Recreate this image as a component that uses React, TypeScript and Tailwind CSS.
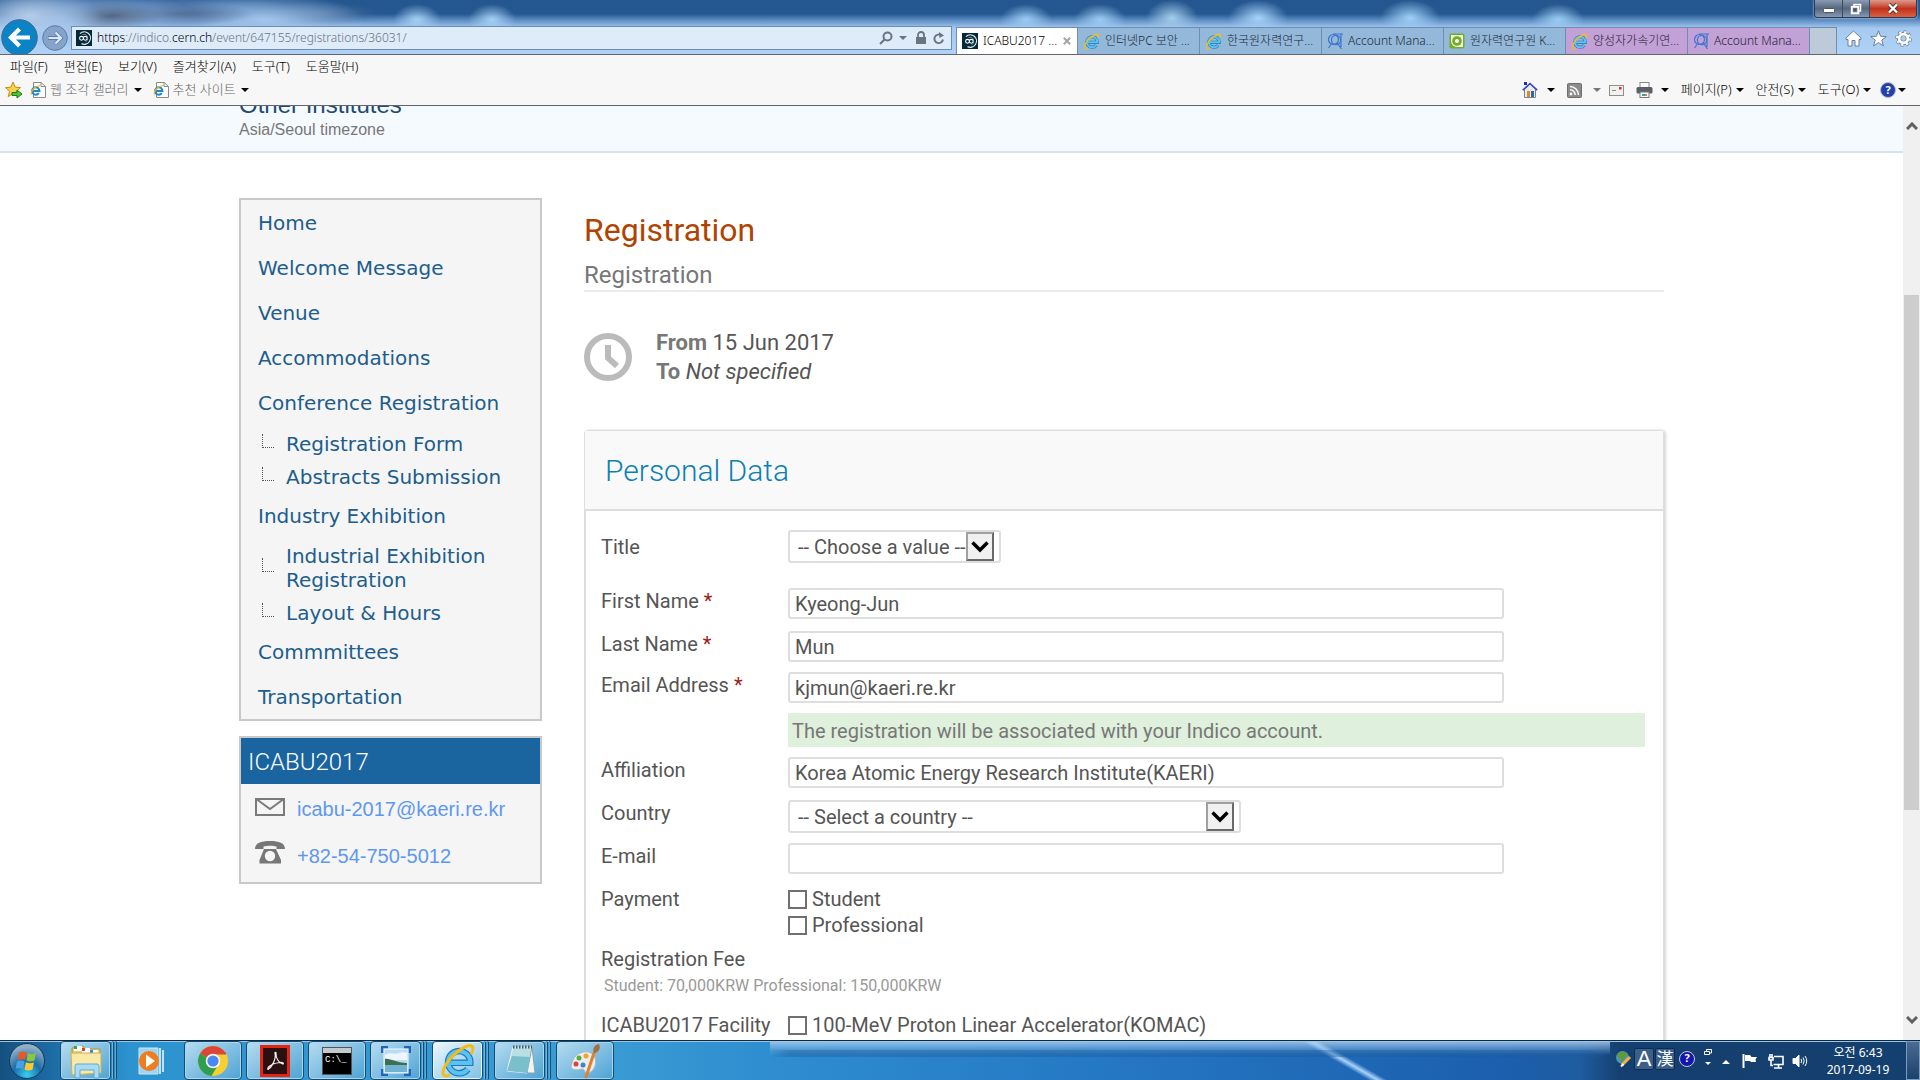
import React from 'react';
import clsx from 'clsx';

const navTabs = [
  { label: 'ICABU2017 ...', icon: 'indico', tone: 'active' },
  { label: '인터넷PC 보안 ...', icon: 'ie', tone: 'blue' },
  { label: '한국원자력연구...', icon: 'ie', tone: 'blue' },
  { label: 'Account Mana...', icon: 'cern', tone: 'blue' },
  { label: '원자력연구원 K...', icon: 'kaeri', tone: 'blue' },
  { label: '양성자가속기연...', icon: 'ie', tone: 'purple' },
  { label: 'Account Mana...', icon: 'cern', tone: 'purple' },
];

const menuBar = ['파일(F)', '편집(E)', '보기(V)', '즐겨찾기(A)', '도구(T)', '도움말(H)'];

const conferenceMenu = [
  { label: 'Home' },
  { label: 'Welcome Message' },
  { label: 'Venue' },
  { label: 'Accommodations' },
  { label: 'Conference Registration', children: ['Registration Form', 'Abstracts Submission'] },
  { label: 'Industry Exhibition', children: ['Industrial Exhibition Registration', 'Layout & Hours'] },
  { label: 'Commmittees' },
  { label: 'Transportation' },
];

interface IconProps {
  className?: string;
}

const IeLogo: React.FC<IconProps> = ({ className }) => (
  <svg viewBox="0 0 24 24" fill="none" className={className}>
    <path d="M7 13.2H20.2A7.4 7.4 0 1 0 18.6 17.4" stroke="#1b77bb" strokeWidth="4.4" />
    <path d="M7 13.2H20.2A7.4 7.4 0 1 0 18.6 17.4" stroke="#5cc3f0" strokeWidth="2.8" />
    <path d="M6 21.5C1.5 23.5 .5 19.5 4.5 13.5S16.500 1.200 20.500 1.800C22.500 2.200 22 4.500 21 6.800" stroke="#f3bd16" strokeWidth="2" strokeLinecap="round" />
  </svg>
);

const IndicoLogo: React.FC<IconProps> = ({ className }) => (
  <svg viewBox="0 0 16 16" fill="none" className={className}>
    <rect width="16" height="16" fill="#04283a" />
    <circle cx="5.500" cy="8.300" r="1.900" stroke="#fff" strokeWidth="1.100" />
    <circle cx="9.300" cy="8.300" r="1.900" stroke="#fff" strokeWidth="1.100" />
    <path d="M4 3.600A6.200 6.200 0 1 1 5.500 13.600" stroke="#dfe8ec" strokeWidth="1.200" />
    <path d="M6.500 4.600A4 4 0 0 1 9.500 12" stroke="#9db2bd" strokeWidth=".8" />
  </svg>
);

const CernLogo: React.FC<IconProps> = ({ className }) => (
  <svg viewBox="0 0 16 16" fill="none" stroke="#3f74cf" strokeWidth="1.200" className={className}>
    <circle cx="6.500" cy="6.500" r="5" />
    <circle cx="9" cy="7" r="4.600" />
    <path d="M6 1H16M14 1V14M4 11.500 1.500 15M10.500 10 14.500 16" />
  </svg>
);

const KaeriLogo: React.FC<IconProps> = ({ className }) => (
  <svg viewBox="0 0 16 16" className={className}>
    <rect x=".5" y=".5" width="15" height="15" rx="2" fill="#72ae24" />
    <path d="M2 2H14V14H8A6 6 0 0 1 2 8Z" fill="#fff" opacity=".9" />
    <circle cx="8" cy="8" r="4.800" fill="#72ae24" />
    <circle cx="8" cy="8" r="2" fill="#fff" />
  </svg>
);

const TabIcon: React.FC<{ name: string }> = ({ name }) => {
  if (name === 'indico') return <IndicoLogo className="size-4 shrink-0" />;
  if (name === 'cern') return <CernLogo className="size-4 shrink-0" />;
  if (name === 'kaeri') return <KaeriLogo className="size-4 shrink-0" />;
  return <IeLogo className="size-[17px] shrink-0" />;
};

const Caret: React.FC<IconProps> = ({ className }) => (
  <svg viewBox="0 0 8 4" className={clsx('h-1 w-2 shrink-0', className)}>
    <path d="M0 0H8L4 4Z" fill="currentColor" />
  </svg>
);

const IePage = () => (
  <svg viewBox="0 0 16 18" fill="none" className="h-[18px] w-4 shrink-0">
    <path d="M3.500 1.500H11L15.500 5.500V16.500H3.500Z" fill="#fff" stroke="#8a8a8a" />
    <path d="M11 1.500V5.500H15.500" stroke="#8a8a8a" />
    <path d="M2.500 10H9.500A3.700 3.700 0 1 0 8.800 12.200" stroke="#1e86d0" strokeWidth="2" />
    <path d="M1.500 13.500C.5 11 4 5 10.500 4.500" stroke="#efb61c" strokeWidth="1.200" />
  </svg>
);

const TitleBar = () => (
  <div className="flex h-[19px] justify-end pr-[3px]">
    <div className="flex h-[18px] overflow-hidden rounded-b border border-t-0 border-[#2a3a50] shadow-[0_0_2px_#ffffff]">
      <button aria-label="Minimize" className="flex w-7 items-center justify-center border-r border-[#3c4a5e] bg-linear-to-b from-[#8a9bb2] via-[#56687f] to-[#8599b3]">
        <svg viewBox="0 0 12 5" className="mt-1 h-[5px] w-3"><rect x=".5" y=".5" width="11" height="4" rx="1" fill="#fff" stroke="#4b5563" /></svg>
      </button>
      <button aria-label="Restore" className="flex w-[27px] items-center justify-center border-r border-[#3c4a5e] bg-linear-to-b from-[#8a9bb2] via-[#56687f] to-[#8599b3]">
        <svg viewBox="0 0 12 12" fill="none" className="size-3">
          <path d="M4 3V1.500H10.500V8H9" stroke="#fff" strokeWidth="1.500" />
          <rect x="1.800" y="3.800" width="6.500" height="6.500" stroke="#fff" strokeWidth="2" />
          <rect x="4" y="6" width="2" height="2" fill="#46556b" />
        </svg>
      </button>
      <button aria-label="Close" className="flex w-[46px] items-center justify-center bg-linear-to-b from-[#dc9a8c] via-[#c2311b] to-[#d9603f]">
        <svg viewBox="0 0 12 11" className="h-[11px] w-3">
          <path d="M2 1.500 10 9.500M10 1.500 2 9.500" stroke="#4f3434" strokeWidth="4" />
          <path d="M2 1.500 10 9.500M10 1.500 2 9.500" stroke="#fff" strokeWidth="2.400" />
        </svg>
      </button>
    </div>
  </div>
);

const AddressRow = () => (
  <div className="flex h-[35px] items-end">
    <div className="flex h-[35px] w-[71px] shrink-0 items-start overflow-hidden pl-px">
      <button aria-label="Back" className="size-[37px] shrink-0">
        <svg viewBox="0 0 37 37" className="size-[37px]">
          <circle cx="18.500" cy="18.500" r="17.800" fill="#0b83c5" stroke="#41678f" />
          <path d="M29 18.500H11M18.500 10 10 18.500 18.500 27" stroke="#fff" strokeWidth="4.200" fill="none" />
        </svg>
      </button>
      <button aria-label="Forward" className="mt-1.5 ml-1 size-[26px] shrink-0">
        <svg viewBox="0 0 26 26" className="size-[26px]">
          <circle cx="13" cy="13" r="12.300" fill="#86a3ca" stroke="#5f7ba5" />
          <path d="M6 13H19M13.500 7.500 19 13 13.500 18.500" stroke="#5d7ca6" strokeWidth="3.800" fill="none" />
          <path d="M6.500 13H19M13.500 7.500 19 13 13.500 18.500" stroke="#dce8f8" strokeWidth="2.200" fill="none" />
        </svg>
      </button>
    </div>
    <div className="mb-1 flex h-6 flex-1 items-center border border-[#6f8db2] bg-[#deebf9] pl-1 pr-1.5">
      <IndicoLogo className="mr-[5px] size-4 shrink-0" />
      <div className="flex-1 text-[12px] text-[#6b7480]">
        <span className="text-black">https</span>://indico.<span className="text-black">cern.ch</span>/event/647155/registrations/36031/
      </div>
      <div className="flex items-center text-[#6a7480]">
        <svg viewBox="0 0 14 14" fill="none" stroke="currentColor" strokeWidth="2" className="size-[14px]">
          <circle cx="8.500" cy="5.500" r="4" />
          <path d="M5.500 8.500 1 13" />
        </svg>
        <Caret className="mr-2 ml-1.5" />
        <svg viewBox="0 0 12 14" className="mr-1.5 h-[14px] w-3">
          <path d="M3 6V4A3 3 0 0 1 9 4V6" stroke="currentColor" strokeWidth="1.800" fill="none" />
          <rect x="1" y="6" width="10" height="7" fill="currentColor" />
        </svg>
        <svg viewBox="0 0 12 14" fill="none" className="h-[14px] w-3">
          <path d="M10 8.500A4.300 4.300 0 1 1 8.500 4.500" stroke="currentColor" strokeWidth="1.900" />
          <path d="M6 1 11 4.500 6.500 7Z" fill="currentColor" />
        </svg>
      </div>
    </div>
    <div className="ml-1 flex h-[27px] shrink-0">
      {navTabs.map((tab, i) => (
        <button
          key={i}
          className={clsx(
            'flex w-[122px] items-center gap-[5px] border-t border-r border-[#6f8db2] pl-[5px] text-[12px] whitespace-nowrap',
            tab.tone === 'active' && 'border-l bg-white text-black',
            tab.tone === 'blue' && 'bg-[#93b8d9] text-[#1c2a38]',
            tab.tone === 'purple' && 'bg-[#c1a1d6] text-[#2a2036]',
          )}
        >
          <TabIcon name={tab.icon} />
          <span className="flex-1 overflow-hidden text-left">{tab.label}</span>
          {tab.tone === 'active' && (
            <svg viewBox="0 0 8 8" className="mr-1.5 size-2 shrink-0"><path d="M.8.8 7.200 7.200M7.200.8.8 7.200" stroke="#a3a3a3" strokeWidth="2" /></svg>
          )}
        </button>
      ))}
      <button aria-label="New tab" className="w-[27px] border-t border-r border-[#6f8db2] bg-[#bccad9]" />
    </div>
    <div className="flex h-[31px] w-[83px] shrink-0 items-center justify-center gap-2">
      <svg viewBox="0 0 17 17" className="size-[17px]"><path d="M8.500 1 16 8V9.500H14V16H10V10.500H7V16H3V9.500H1V8Z" fill="#fff" stroke="#6f7f95" /></svg>
      <svg viewBox="0 0 17 17" className="size-[17px]"><path d="M8.500.8 10.600 6.300 16.300 6.500 11.800 10.100 13.400 15.900 8.500 12.600 3.600 15.900 5.200 10.100.7 6.500 6.400 6.300Z" fill="#fff" stroke="#6f7f95" /></svg>
      <svg viewBox="0 0 17 17" fill="none" className="size-[17px]">
        <circle cx="8.500" cy="8.500" r="6.800" stroke="#6f7f95" strokeWidth="3" strokeDasharray="2.700 2.640" />
        <circle cx="8.500" cy="8.500" r="4.600" stroke="#6f7f95" strokeWidth="4.400" />
        <circle cx="8.500" cy="8.500" r="6.400" stroke="#fff" strokeWidth="2.400" strokeDasharray="2.100 2.930" />
        <circle cx="8.500" cy="8.500" r="4.400" stroke="#fff" strokeWidth="2.800" />
      </svg>
    </div>
  </div>
);

const CommandBar = () => (
  <div className="flex h-[30px] items-center pr-3.5 pl-[5px] text-[13px] whitespace-nowrap text-black">
    <svg viewBox="0 0 18 18" className="mr-[7px] size-[18px]">
      <path d="M8 1 10.200 6.200 15.600 6.600 11.400 10.200 12.800 15.600 8 12.600 3.200 15.600 4.600 10.200.5 6.600 5.800 6.200Z" fill="#fbd34b" stroke="#c98a14" />
      <path d="M7 11.500H12V9L17 13 12 17V14.500H7Z" fill="#4fc23a" stroke="#1c7d16" />
    </svg>
    <IePage />
    <span className="ml-1 text-[#666]">웹 조각 갤러리</span>
    <Caret className="ml-[5px]" />
    <span className="w-[11px]" />
    <IePage />
    <span className="ml-1 text-[#666]">추천 사이트</span>
    <Caret className="ml-[5px]" />
    <div className="ml-auto flex items-center">
      <svg viewBox="0 0 16 16" className="size-4">
        <path d="M2.500 7V15.500H13.500V7L8 2Z" fill="#e8eaf0" stroke="#7c8194" />
        <path d="M.8 8.200 8 1.500 15.200 8.200" stroke="#3a49b8" strokeWidth="1.600" fill="none" />
        <rect x="2" y="0" width="3" height="3" fill="#1c2fc4" />
        <rect x="5" y="9" width="3" height="6" fill="#e08a26" />
        <rect x="9" y="9" width="3" height="6" fill="#2a6aa8" />
      </svg>
      <Caret className="ml-[9px]" />
      <svg viewBox="0 0 15 15" fill="none" className="ml-3 size-[15px]">
        <rect x=".5" y=".5" width="14" height="14" rx="1" fill="#8c8c8c" stroke="#6d6d6d" />
        <circle cx="4" cy="11" r="1.400" fill="#fff" />
        <path d="M3 6.800A5.200 5.200 0 0 1 8.200 12M3 3.500A8.500 8.500 0 0 1 11.500 12" stroke="#fff" strokeWidth="1.500" />
      </svg>
      <Caret className="ml-[11px] text-[#777]" />
      <svg viewBox="0 0 15 11" className="ml-2 h-[11px] w-[15px]">
        <rect x=".5" y=".5" width="14" height="10" fill="#f4f2ee" stroke="#8e8e8e" />
        <path d="M3 5.500H7" stroke="#888" />
        <rect x="10" y="2" width="2.500" height="2.500" fill="#d22c2c" />
      </svg>
      <svg viewBox="0 0 17 16" className="ml-3 h-4 w-[17px]">
        <rect x="4" y=".5" width="9" height="6" fill="#fff" stroke="#888" />
        <rect x=".5" y="5" width="16" height="6.500" rx="1.500" fill="#5a6066" />
        <rect x="4" y="10" width="9" height="5.500" fill="#fff" stroke="#777" />
        <path d="M6 13H9" stroke="#25a0c8" strokeWidth="2" />
        <path d="M9 13H11" stroke="#e07a2c" strokeWidth="2" />
      </svg>
      <Caret className="ml-2" />
      <button className="ml-3 flex items-center gap-1">페이지(P) <Caret /></button>
      <button className="ml-3 flex items-center gap-1">안전(S) <Caret /></button>
      <button className="ml-3 flex items-center gap-1">도구(O) <Caret /></button>
      <button aria-label="Help" className="ml-[9px] flex items-center gap-0.5">
        <span className="flex size-4 items-center justify-center rounded-full border border-[#b4bccb] bg-[#2440a8] text-[11px] font-bold text-white">?</span>
        <Caret />
      </button>
    </div>
  </div>
);

const SideMenu = () => (
  <nav className="border-2 border-[#c9c9c9] bg-[#f5f5f5] font-['DejaVu_Sans',sans-serif] text-[20px] leading-6 text-[#215d8c]">
    <ul>
      {conferenceMenu.map((item) => (
        <li key={item.label}>
          <a href="#" className="flex h-[45px] items-center pl-[17px]">{item.label}</a>
          {item.children && (
            <ul className="pt-0.5">
              {item.children.map((child) => (
                <li key={child} className="flex min-h-[33px] items-center pl-[21px]">
                  <span className="mr-3 mb-1.5 h-3.5 w-3 shrink-0 border-b border-l border-dotted border-[#555]" />
                  <a href="#" className="py-1 pr-8">{child}</a>
                </li>
              ))}
            </ul>
          )}
        </li>
      ))}
    </ul>
  </nav>
);

const ContactBox = () => (
  <section className="mt-[15px] border-2 border-[#c9c9c9] bg-[#f5f5f5]">
    <h3 className="h-[46px] bg-[#1a64a0] pl-[7px] text-[24px] leading-[48px] font-light text-white">ICABU2017</h3>
    <div className="flex h-[50px] items-center gap-3 pl-3.5 font-['Liberation_Sans',Arial,sans-serif] text-[20px] text-[#5e98ee]">
      <svg viewBox="0 0 30 18" fill="none" stroke="#7a7a7a" strokeWidth="2" className="mb-1 h-[18px] w-[30px]">
        <rect x="1" y="1" width="28" height="16" />
        <path d="M2 1.500 15 11 28 1.500" />
      </svg>
      <a href="#">icabu-2017@kaeri.re.kr</a>
    </div>
    <div className="flex h-12 items-start gap-3 pt-2.5 pl-3.5 font-['Liberation_Sans',Arial,sans-serif] text-[20px] leading-6 text-[#5e98ee]">
      <svg viewBox="0 0 30 24" className="-mt-1 h-6 w-[30px]">
        <path d="M0 9C0 3 6 1 15 1S30 3 30 9H21.500V6.500C18 5.500 12 5.500 8.500 6.500V9Z" fill="#777" />
        <path fillRule="evenodd" d="M9 9H21L26 20V23.500H4.500V20ZM15 10.800A5.200 5.200 0 1 0 15 21.200A5.200 5.200 0 1 0 15 10.800Z" fill="#777" />
      </svg>
      <a href="#">+82-54-750-5012</a>
    </div>
  </section>
);

interface FieldRowProps {
  label: string;
  htmlFor?: string;
  required?: boolean;
  className?: string;
  children?: React.ReactNode;
}

const FieldRow: React.FC<FieldRowProps> = ({ label, htmlFor, required, className, children }) => (
  <div className={clsx('flex', className)}>
    <label htmlFor={htmlFor} className="w-[187px] shrink-0 leading-[26px]">
      {label}
      {required && <span className="text-[#9b1b1b]"> *</span>}
    </label>
    <div className="min-w-0 flex-1">{children}</div>
  </div>
);

const TextField: React.FC<{ id: string; value: string }> = ({ id, value }) => (
  <input
    id={id}
    type="text"
    defaultValue={value}
    className="block h-[31px] w-full max-w-[716px] rounded-[3px] border-2 border-[#dedede] bg-white px-[5px]"
  />
);

const SelectField: React.FC<{ id: string; value: string; className: string }> = ({ id, value, className }) => (
  <div className={clsx('relative', className)}>
    <select id={id} className="block h-[33px] w-full appearance-none rounded-[3px] border-2 border-[#dedede] bg-white pl-2">
      <option>{value}</option>
    </select>
    <span className="pointer-events-none absolute top-0.5 right-[7px] flex h-[29px] w-7 items-center justify-center border-2 border-t-[#a0a0a0] border-r-[#696969] border-b-[#696969] border-l-[#a0a0a0] bg-[#f0f0f0]">
      <svg viewBox="0 0 18 12" className="h-3 w-[18px]"><path d="M1.500 1.500 9 9 16.500 1.500" stroke="#000" strokeWidth="3.400" fill="none" /></svg>
    </span>
  </div>
);

const CheckField: React.FC<{ label: string }> = ({ label }) => (
  <label className="flex h-[26px] items-center gap-[5px]">
    <input type="checkbox" className="size-[19px] appearance-none border-2 border-[#707070] bg-white" />
    {label}
  </label>
);

const RegistrationForm = () => (
  <form className="mt-[43px] rounded-t border border-b-0 border-[#dedede] shadow-[2px_0_3px_#d8d8d8]">
    <h2 className="h-20 border-b-2 border-[#dedede] bg-[#f9f9f9] pl-5 text-[30px] leading-20 font-light text-[#0b80b4]">Personal Data</h2>
    <div className="border-l border-[#dedede] pt-[19px] pr-[18px] pl-[15px] text-[20px] text-[#555]">
      <FieldRow label="Title" htmlFor="title" className="mb-[25px] items-center">
        <SelectField id="title" value="-- Choose a value --" className="w-[213px]" />
      </FieldRow>
      <FieldRow label="First Name" htmlFor="first" required className="mb-3 items-start">
        <TextField id="first" value="Kyeong-Jun" />
      </FieldRow>
      <FieldRow label="Last Name" htmlFor="last" required className="mb-2.5 items-start">
        <TextField id="last" value="Mun" />
      </FieldRow>
      <FieldRow label="Email Address" htmlFor="email" required className="mb-2.5 items-start">
        <TextField id="email" value="kjmun@kaeri.re.kr" />
        <p className="mt-2.5 h-[34px] bg-[#dff0dd] pl-1 leading-9 text-[#777]">
          The registration will be associated with your Indico account.
        </p>
      </FieldRow>
      <FieldRow label="Affiliation" htmlFor="affiliation" className="mb-3 items-start">
        <TextField id="affiliation" value="Korea Atomic Energy Research Institute(KAERI)" />
      </FieldRow>
      <FieldRow label="Country" htmlFor="country" className="mb-2.5 items-start">
        <SelectField id="country" value="-- Select a country --" className="w-[453px]" />
      </FieldRow>
      <FieldRow label="E-mail" htmlFor="contact" className="mb-3 items-start">
        <TextField id="contact" value="" />
      </FieldRow>
      <FieldRow label="Payment" className="mb-2 items-start">
        <CheckField label="Student" />
        <CheckField label="Professional" />
      </FieldRow>
      <FieldRow label="Registration Fee" />
      <p className="mb-3 pl-[3px] text-[16px] leading-7 text-[#999]">Student: 70,000KRW Professional: 150,000KRW</p>
      <FieldRow label="ICABU2017 Facility" className="items-start">
        <CheckField label="100-MeV Proton Linear Accelerator(KOMAC)" />
      </FieldRow>
      <div className="h-10" />
    </div>
  </form>
);

const ScrollBar = () => (
  <div className="flex w-[17px] shrink-0 flex-col items-center bg-[#f0f0f0] py-4">
    <svg viewBox="0 0 12 8" className="h-2 w-3"><path d="M1 7 6 2 11 7" stroke="#606060" strokeWidth="3" fill="none" /></svg>
    <div className="mt-[165px] mb-[206px] w-[15px] flex-1 bg-[#cdcdcd]" />
    <svg viewBox="0 0 12 8" className="h-2 w-3"><path d="M1 1 6 6 11 1" stroke="#606060" strokeWidth="3" fill="none" /></svg>
  </div>
);

const FolderIcon = () => (
  <svg viewBox="0 0 34 36" className="h-9 w-[34px]">
    <path d="M3 5 14 3 16 6H31V30L4 31Z" fill="#e9cf6c" stroke="#b8963a" />
    <rect x="5" y="3" width="8" height="5" fill="#fff" /><rect x="5" y="3" width="3" height="3" fill="#38a34a" />
    <rect x="13" y="5" width="8" height="5" fill="#fff" /><rect x="13" y="5" width="3" height="3" fill="#d2452c" />
    <rect x="21" y="7" width="8" height="4" fill="#fff" /><rect x="21" y="7" width="3" height="3" fill="#3a88d8" />
    <path d="M2 10H32V30L3 32Z" fill="#f8e9a6" stroke="#cfae50" />
    <path d="M6 35V23Q6 21 8 21H28Q30 21 30 23V35H25V27H11V35Z" fill="#a8dcf5" stroke="#5ea9d4" />
  </svg>
);

const MediaIcon = () => (
  <svg viewBox="0 0 30 32" className="h-8 w-[30px]">
    <path d="M3 3H22V29H3Z" fill="#9fd4f2" stroke="#c9e8f9" />
    <path d="M24 3V29M27 5V27" stroke="#bfe2f6" strokeWidth="2" />
    <circle cx="13" cy="16" r="10" fill="#f07c1c" />
    <path d="M10 9.500 19 16 10 22.500Z" fill="#fff" />
  </svg>
);

const ChromeIcon = () => (
  <svg viewBox="0 0 32 32" className="size-8">
    <circle cx="16" cy="16" r="15" fill="#f9ce2f" />
    <path d="M16 16 3 8.500A15 15 0 0 1 29 8.500H16Z" fill="#d8473a" />
    <path d="M16 16 3 8.500A15 15 0 0 0 14.500 31L21 20Z" fill="#2f9e4f" />
    <path d="M16 8.500H29" stroke="#d8473a" strokeWidth="2" />
    <circle cx="16" cy="16" r="7.300" fill="#f5f5f5" />
    <circle cx="16" cy="16" r="5.600" fill="#4a87ee" />
  </svg>
);

const AcrobatIcon = () => (
  <svg viewBox="0 0 30 32" className="h-8 w-[30px]">
    <rect x="1.500" y="1.500" width="27" height="29" fill="#2a1010" stroke="#e8230e" strokeWidth="3" />
    <path d="M8.500 24C12 22 16.500 13 15 8.500C14.600 6.800 16.400 6.800 16 8.500C15.500 13 19.500 18.500 22.500 19C24.500 19 23 17 20 17.500C15.500 18 11 19.500 8.500 22C7 24 8 25 8.500 24" fill="none" stroke="#f2f2f2" strokeWidth="1.200" />
  </svg>
);

const TerminalIcon = () => (
  <div className="h-7 w-[30px] border border-[#555] bg-black font-['Liberation_Mono',monospace] text-[9px] leading-[14px] text-white">
    <div className="h-[5px] bg-[#c4c9cf]" />
    <div className="pl-0.5 text-left">C:\_</div>
  </div>
);

const PictureIcon = () => (
  <svg viewBox="0 0 30 30" className="size-[30px]">
    <rect x="3" y="3" width="24" height="24" fill="#b9dcf6" stroke="#f2f9ff" />
    <path d="M4 9C9 5 14 9 18 7S25 8 26 6V14H4Z" fill="#eef6fc" />
    <path d="M4 13C9 12 15 17 26 17V19H4Z" fill="#3f6f4c" />
    <rect x="4" y="19" width="22" height="7" fill="#6fb2d4" />
    <path d="M1 7V1H7M23 1H29V7M29 23V29H23M7 29H1V23" fill="none" stroke="#2563b8" strokeWidth="2.400" />
  </svg>
);

const NotepadIcon = () => (
  <svg viewBox="0 0 32 34" className="h-[34px] w-8">
    <path d="M9 3H28L23 29 3 27Z" fill="#b9dfe6" stroke="#e7f3f5" />
    <path d="M28 3 31 29 23 29Z" fill="#f1f4f4" stroke="#8ca2a8" />
    <path d="M9 3H28" stroke="#4a5b62" strokeWidth="3" strokeDasharray="1.500 1.500" />
    <path d="M8 12 26 13 23 29 3 27Z" fill="#7bbfca" />
  </svg>
);

const PaintIcon = () => (
  <svg viewBox="0 0 32 36" className="h-9 w-8">
    <path d="M4 17C7 10 16 7 22 10C29 14 28 26 20 30C15 32 17 26 13 26C9 27 2 28 2 23Z" fill="#e9eef4" stroke="#aeb9c6" />
    <circle cx="7" cy="21" r="2.500" fill="#de4334" />
    <circle cx="10" cy="15" r="2.500" fill="#59ad38" />
    <circle cx="17" cy="13" r="2.500" fill="#f0a524" />
    <circle cx="14" cy="22" r="2.500" fill="#3d86cc" />
    <path d="M17 34 25 10" stroke="#e0822a" strokeWidth="3" strokeLinecap="round" />
    <path d="M25 10C23 6 25 2 30 1C32 5 30 9 26 10Z" fill="#a2703e" />
  </svg>
);

const taskButtons = [
  { name: 'Explorer', icon: <FolderIcon />, stacked: true },
  { name: 'Media Player', icon: <MediaIcon />, flat: true },
  { name: 'Chrome', icon: <ChromeIcon /> },
  { name: 'Acrobat', icon: <AcrobatIcon /> },
  { name: 'Command Prompt', icon: <TerminalIcon /> },
  { name: 'Pictures', icon: <PictureIcon />, stacked: true },
  { name: 'Internet Explorer', icon: <IeLogo className="size-9" />, stacked: true, active: true },
  { name: 'Notepad', icon: <NotepadIcon />, stacked: true },
  { name: 'Paint', icon: <PaintIcon /> },
];

const TaskBar = () => (
  <footer className="flex h-10 shrink-0 items-stretch border-t border-[#0d2a44] shadow-[inset_0_1px_0_#9cc6e6] [background:linear-gradient(to_right,transparent,#1c5a9a66_20px,#1c5a9a66_820px,transparent)_770px_9px/840px_7px_no-repeat,linear-gradient(#b4d4f2cc,#7fb0e066_9px,transparent_14px)_770px_0/840px_16px_no-repeat,linear-gradient(30deg,transparent_44%,#a9d2fb_50%,transparent_56%)_1300px_0/90px_40px_no-repeat,linear-gradient(to_right,#15507f_0,#1c6ba3_50px,#2c93cf_130px,#3a9cd4_600px,#2f8ed0_760px,#2578c4_1100px,#1b5fae_1500px,#1e5ca0_1580px,#153f70_1620px,#14406f_100%)]">
    <button aria-label="Start" className="flex w-[60px] items-center pl-2">
      <svg viewBox="0 0 38 38" className="size-[38px]">
        <defs>
          <radialGradient id="orb" cx=".5" cy=".9" r=".8">
            <stop offset="0" stopColor="#35d0f5" />
            <stop offset=".5" stopColor="#1c6da6" />
            <stop offset="1" stopColor="#8fb0c8" />
          </radialGradient>
        </defs>
        <circle cx="19" cy="19" r="17.500" fill="url(#orb)" stroke="#103656" />
        <path d="M11 10.500C13.500 9 16 9.200 18.500 10.500L17 18C14.500 16.700 12 16.700 9.500 18Z" fill="#e8592a" />
        <path d="M20 11C22.500 12.300 25.500 12.300 28 11L26.500 18.500C24 19.800 21 19.800 18.500 18.500Z" fill="#8cc63e" />
        <path d="M9 19.500C11.500 18.200 14 18.200 16.500 19.500L15 27C12.500 25.700 10 25.700 7.500 27Z" fill="#4aa0e6" />
        <path d="M18 20.200C20.500 21.500 23.500 21.500 26 20.200L24.500 27.500C22 28.800 19 28.800 16.500 27.500Z" fill="#fbc92c" />
      </svg>
    </button>
    <div className="flex gap-1">
      {taskButtons.map((task) => (
        <button key={task.name} aria-label={task.name} className="flex w-[58px] gap-px">
          <span
            className={clsx(
              'flex h-full flex-1 items-center justify-center rounded-sm border',
              task.flat ? 'border-transparent' : 'border-[#164a70]',
              !task.flat && (task.active
                ? 'bg-linear-to-br from-[#f0f8fc] to-[#7cc0e4] shadow-[inset_0_0_0_1px_#e6f6ff]'
                : 'bg-linear-to-br from-[#b5dcf0] to-[#4ba3d4] shadow-[inset_0_0_0_1px_#a8d8f0]'),
            )}
          >
            {task.icon}
          </span>
          {task.stacked && <span className="h-full w-0.5 rounded-r-sm border-r border-[#164a70] bg-[#6cb8e0]" />}
          {task.stacked && <span className="mr-px h-full w-0.5 rounded-r-sm border-r border-[#164a70] bg-[#5aacd8]" />}
        </button>
      ))}
    </div>
    <div className="ml-auto flex items-center text-white">
      <svg viewBox="0 0 17 17" className="mb-1 size-[17px]">
        <circle cx="7.500" cy="7.500" r="6.500" fill="#4f93c4" />
        <path d="M2 5C5 1 9 1 13 4L9 9 7 13C6 9 3 9 2 5Z" fill="#5f9a3b" />
        <path d="M7 15 15 7" stroke="#f0b43c" strokeWidth="3" />
        <path d="M6 16.500 8.500 14" stroke="#fff" strokeWidth="2" />
      </svg>
      <span className="mb-1 ml-0.5 flex h-[22px] w-5 items-center justify-center rounded-xs border border-[#0e2c50] bg-[#3b5f88] font-['Liberation_Sans',sans-serif] text-[22px]">A</span>
      <span className="mb-1 ml-px flex h-[22px] w-5 items-center justify-center rounded-xs border border-[#0e2c50] bg-[#3b5f88] text-[17px]">漢</span>
      <span className="mb-1 ml-1 flex size-4 items-center justify-center rounded-full border border-[#c0cbdc] bg-[#1515b0] text-[11px] font-bold">?</span>
      <svg viewBox="0 0 10 18" className="mb-2 ml-2 h-[18px] w-[10px]" fill="none" stroke="#fff">
        <path d="M3.500 3V1.500H8.500V5H7M1.500 3.500H6.500V6.500H1.500Z" />
        <path d="M2 14H8L5 17Z" fill="#fff" stroke="none" />
      </svg>
      <svg viewBox="0 0 8 4" className="mt-0.5 ml-[9px] h-1 w-2"><path d="M0 4 4 0 8 4Z" fill="#fff" /></svg>
      <svg viewBox="0 0 16 16" className="ml-3 size-4"><path d="M1.500 1V15" stroke="#fff" strokeWidth="2" /><path d="M3 2H8L9.500 4H15L13.500 6.500 14 9H9L8 8H3Z" fill="#fff" /></svg>
      <svg viewBox="0 0 16 16" fill="none" stroke="#fff" strokeWidth="1.600" className="ml-2.5 size-4"><path d="M6 3.500H15V11.500H5.500M10.500 12V15M6 15H14M2 1V4M4 1V4M1 4.500H5V7H1ZM3 7V12.500H5" /></svg>
      <svg viewBox="0 0 16 16" fill="none" stroke="#fff" className="ml-2 size-4"><path d="M1 5.500H3.500L7 2V14L3.500 10.500H1Z" fill="#fff" /><path d="M9 6Q10.500 8 9 10M11 4.500Q13.500 8 11 11.500M13 3Q16.500 8 13 13" /></svg>
      <div className="w-[98px] pr-1 pl-1.5 text-center text-[12px] leading-[17px]">
        <div>오전 6:43</div>
        <div>2017-09-19</div>
      </div>
      <button aria-label="Show desktop" className="h-full w-3.5 border border-[#7d9cbd] bg-linear-to-b from-[#4a6b92] to-[#1b416e]" />
    </div>
  </footer>
);

const App: React.FC = () => (
  <div className="flex h-screen flex-col overflow-hidden bg-white font-['Noto_Sans','Noto_Sans_CJK_KR',sans-serif]">
    <header className="shrink-0 font-light">
      <div className="h-[54px] bg-[radial-gradient(ellipse_70px_30px_at_30px_16px,#b4cdea,transparent),radial-gradient(ellipse_50px_14px_at_112px_16px,#45576fcc,transparent),radial-gradient(ellipse_110px_30px_at_90px_20px,#9cc0ec,transparent),radial-gradient(ellipse_80px_12px_at_175px_14px,#44618a,transparent),radial-gradient(ellipse_100px_26px_at_265px_20px,#a3c5ea,transparent),radial-gradient(ellipse_60px_12px_at_320px_14px,#4a6f9f,transparent),radial-gradient(ellipse_120px_24px_at_190px_18px,#7ea6d8,transparent),radial-gradient(ellipse_24px_16px_at_417px_20px,#a5d0f5,transparent),radial-gradient(ellipse_24px_16px_at_492px_20px,#a5d0f5,transparent),radial-gradient(ellipse_26px_16px_at_1026px_20px,#9cccf4,transparent),radial-gradient(ellipse_26px_16px_at_1100px_20px,#9cccf4,transparent),radial-gradient(ellipse_26px_18px_at_1172px_18px,#a4cdea,transparent),radial-gradient(ellipse_30px_18px_at_1258px_18px,#a8d2fb,transparent),radial-gradient(ellipse_30px_18px_at_1410px_18px,#9fd0f8,transparent),radial-gradient(ellipse_26px_16px_at_1558px_20px,#9cccf4,transparent),linear-gradient(#25568f_0,#255890_14px,#5b8cc2_20px,#a5c9f0_28px,#b0d2f7_100%)]">
        <TitleBar />
        <AddressRow />
      </div>
      <div className="border-t border-b border-[#60656e] bg-[#f7f7f7]">
        <div className="flex h-5 items-center gap-4 pt-0.5 pl-2.5 text-[13px] leading-5">
          {menuBar.map((item) => (
            <button key={item}>{item}</button>
          ))}
        </div>
        <CommandBar />
      </div>
    </header>

    <div className="flex min-h-0 flex-1">
      <main className="min-w-0 flex-1 overflow-hidden font-['Roboto','Liberation_Sans',sans-serif]">
        <div className="flex h-[47px] flex-col justify-end overflow-hidden border-b-2 border-[#d4e3ef] bg-[#f5faff]">
          <div className="mx-auto w-full max-w-[1425px] font-['Liberation_Sans',Arial,sans-serif]">
            <h1 className="text-[24px] leading-[30px] text-[#234b6e]">Other Institutes</h1>
            <p className="pb-[11px] text-[16px] leading-5 text-[#777]">Asia/Seoul timezone</p>
          </div>
        </div>
        <div className="mx-auto flex w-full max-w-[1425px] items-start gap-[42px] pt-[45px]">
          <aside className="w-[303px] shrink-0">
            <SideMenu />
            <ContactBox />
          </aside>
          <section className="min-w-0 flex-1 pt-3">
            <h1 className="text-[32px] leading-10 text-[#b14300]">Registration</h1>
            <h2 className="mt-[11px] border-b-2 border-[#ebebeb] text-[24px] leading-[29px] text-[#777]">Registration</h2>
            <div className="mt-9 mb-11 flex items-center gap-6 text-[22px] leading-[29px] text-[#555]">
              <svg viewBox="0 0 48 48" fill="none" stroke="#bbb" strokeWidth="6" className="size-12">
                <circle cx="24" cy="24" r="21" />
                <path d="M24 12V25L33 33" />
              </svg>
              <div>
                <div><span className="font-bold text-[#777]">From</span> 15 Jun 2017</div>
                <div><span className="font-bold text-[#777]">To</span> <em>Not specified</em></div>
              </div>
            </div>
            <RegistrationForm />
          </section>
        </div>
      </main>
      <ScrollBar />
    </div>

    <TaskBar />
  </div>
);

export default App;
